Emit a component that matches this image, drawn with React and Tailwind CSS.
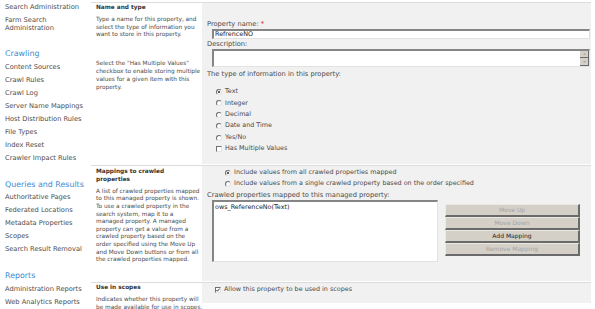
import React from "react";

const navGroups = [
  {
    heading: "Crawling",
    items: [
      "Content Sources",
      "Crawl Rules",
      "Crawl Log",
      "Server Name Mappings",
      "Host Distribution Rules",
      "File Types",
      "Index Reset",
      "Crawler Impact Rules",
    ],
  },
  {
    heading: "Queries and Results",
    items: [
      "Authoritative Pages",
      "Federated Locations",
      "Metadata Properties",
      "Scopes",
      "Search Result Removal",
    ],
  },
  {
    heading: "Reports",
    items: ["Administration Reports", "Web Analytics Reports"],
  },
];

const mappingText = [
  "A list of crawled properties mapped",
  "to this managed property is shown.",
  "To use a crawled property in the",
  "search system, map it to a",
  "managed property. A managed",
  "property can get a value from a",
  "crawled property based on the",
  "order specified using the Move Up",
  "and Move Down buttons or from all",
  "the crawled properties mapped.",
];

function Lines({ lines }) {
  return lines.map((l) => (
    <div key={l} className="whitespace-nowrap">
      {l}
    </div>
  ));
}

function Radio({ checked }) {
  return (
    <span className="relative inline-block shrink-0 w-[6px] h-[6px] rounded-full bg-white border border-t-[#6f6f6f] border-l-[#6f6f6f] border-r-[#e4e4e4] border-b-[#e4e4e4]">
      {checked && (
        <span className="absolute left-[1px] top-[1px] w-[2px] h-[2px] rounded-full bg-[#222]" />
      )}
    </span>
  );
}

function Check({ checked }) {
  return (
    <span className="relative inline-block shrink-0 w-[6px] h-[6px] bg-white border border-t-[#6f6f6f] border-l-[#6f6f6f] border-r-[#e4e4e4] border-b-[#e4e4e4]">
      {checked && (
        <svg viewBox="0 0 4 4" className="absolute inset-0 w-[4px] h-[4px]">
          <path d="M0.4 2 L1.5 3.2 L3.6 0.6" fill="none" stroke="#222" strokeWidth="0.9" />
        </svg>
      )}
    </span>
  );
}

function Option({ checked, box, children }) {
  return (
    <div className="h-[11.4px] flex items-center gap-[3px] whitespace-nowrap">
      {box ? <Check checked={checked} /> : <Radio checked={checked} />}
      <span>{children}</span>
    </div>
  );
}

function Button({ active, children }) {
  return (
    <div
      className={`h-[13px] bg-[#d4d0c8] border-t border-l border-t-[#ece9e3] border-l-[#ece9e3] border-r-2 border-b-2 border-r-[#6a6a6a] border-b-[#6a6a6a] flex items-center justify-center text-[6px] ${
        active ? "text-[#222]" : "text-[#a3a3a3]"
      }`}
    >
      {children}
    </div>
  );
}

const inset =
  "bg-white border-t-2 border-l-2 border-r border-b border-t-[#858585] border-l-[#858585] border-r-[#e2e2e2] border-b-[#e2e2e2]";

export default function App() {
  return (
    <div className="w-[595px] h-[309px] overflow-hidden bg-white flex font-['DejaVu_Sans',sans-serif]">
      {/* Left navigation */}
      <div className="w-[91px] shrink-0 pl-[5px] pt-[1px] text-[6.7px] text-[#4d4d4d]">
        <div className="h-[13px] flex items-center whitespace-nowrap">Search Administration</div>
        <div className="pt-[3px] leading-[7.5px]">
          Farm Search
          <br />
          Administration
        </div>
        {navGroups.map((g, i) => (
          <div key={g.heading} className={i === 0 ? "mt-[15.5px]" : "mt-[13.5px]"}>
            <div className="h-[13px] flex items-center text-[7.9px] text-[#3d8bd0] whitespace-nowrap">
              {g.heading}
            </div>
            {g.items.map((it) => (
              <div key={it} className="h-[13px] flex items-center whitespace-nowrap">
                {it}
              </div>
            ))}
          </div>
        ))}
      </div>

      {/* Content */}
      <div className="w-[500px] shrink-0 pt-[2px]">
        {/* Name and type */}
        <div className="h-[163px] border-t border-[#dcdcdc] flex">
          <div className="w-[111px] shrink-0 pl-[5px] text-[5.8px] leading-[7.7px] text-[#4a4a4a]">
            <div className="font-bold text-[5.8px] leading-[8px] text-[#333]">Name and type</div>
            <div className="mt-[5px]">
              <Lines
                lines={[
                  "Type a name for this property, and",
                  "select the type of information you",
                  "want to store in this property.",
                ]}
              />
            </div>
            <div className="mt-[20px] leading-[8px]">
              <Lines
                lines={[
                  'Select the "Has Multiple Values"',
                  "checkbox to enable storing multiple",
                  "values for a given item with this",
                  "property.",
                ]}
              />
            </div>
          </div>
          <div className="w-[389px] h-[161px] bg-[#f1f1f1] pl-[5px] pr-[1px] text-[6.7px] text-[#4a4a4a]">
            <div className="mt-[17px] leading-[8px]">
              Property name: <span className="text-[#e01010]">*</span>
            </div>
            <div className={`ml-[5px] mt-[1px] h-[10px] ${inset} flex items-center pl-[1px] text-[6.4px] text-[#222]`}>
              RefrenceNO
            </div>
            <div className="mt-[1.3px] leading-[8px]">Description:</div>
            <div className={`ml-[5px] mt-[0.7px] h-[18px] ${inset} flex justify-end`}>
              <div className="w-[9px] flex flex-col">
                <div className="h-[8px] bg-[#d4d0c8] border-r border-b border-[#6a6a6a] flex items-center justify-center">
                  <svg viewBox="0 0 4 2" className="w-[3px] h-[2px]">
                    <path d="M0 2 L2 0 L4 2 Z" fill="#9a9a9a" />
                  </svg>
                </div>
                <div className="h-[8px] bg-[#d4d0c8] border-r border-b border-[#6a6a6a] flex items-center justify-center">
                  <svg viewBox="0 0 4 2" className="w-[3px] h-[2px]">
                    <path d="M0 0 L2 2 L4 0 Z" fill="#9a9a9a" />
                  </svg>
                </div>
              </div>
            </div>
            <div className="mt-[3px] leading-[8px]">The type of information in this property:</div>
            <div className="mt-[8.3px] ml-[9px] text-[6.4px]">
              <Option checked>Text</Option>
              <Option>Integer</Option>
              <Option>Decimal</Option>
              <Option>Date and Time</Option>
              <Option>Yes/No</Option>
              <Option box>Has Multiple Values</Option>
            </div>
          </div>
        </div>

        {/* Mappings */}
        <div className="h-[117px] border-t border-[#dcdcdc] flex">
          <div className="w-[111px] shrink-0 pl-[5px] text-[5.8px] leading-[7.6px] text-[#4a4a4a]">
            <div className="mt-[1px] font-bold text-[5.8px] leading-[8px] text-[#333]">
              Mappings to crawled
              <br />
              properties
            </div>
            <div className="mt-[4.8px]">
              <Lines lines={mappingText} />
            </div>
          </div>
          <div className="w-[389px] h-[115px] bg-[#f1f1f1] pl-[5px] pr-[1px] text-[6.7px] text-[#4a4a4a]">
            <div className="mt-[1px] ml-[18px] text-[6.4px]">
              <Option checked>Include values from all crawled properties mapped</Option>
              <Option>Include values from a single crawled property based on the order specified</Option>
            </div>
            <div className="mt-[1.2px] leading-[8px]">Crawled properties mapped to this managed property:</div>
            <div className="mt-[1px] ml-[5px] flex items-start">
              <div className={`w-[226px] h-[62px] ${inset} pl-[1px] pt-[1px] text-[6.4px] text-[#222] leading-[8px]`}>
                ows_ReferenceNo(Text)
              </div>
              <div className="ml-[7px] mt-[4px] w-[135px] flex flex-col">
                <Button>Move Up</Button>
                <Button>Move Down</Button>
                <Button active>Add Mapping</Button>
                <Button>Remove Mapping</Button>
              </div>
            </div>
          </div>
        </div>

        {/* Use in scopes */}
        <div className="h-[40px] border-t border-[#dcdcdc] flex">
          <div className="w-[111px] shrink-0 pl-[5px] text-[5.8px] leading-[7.6px] text-[#4a4a4a]">
            <div className="font-bold text-[5.8px] leading-[8px] text-[#333]">Use in scopes</div>
            <div className="mt-[5px]">
              <Lines
                lines={["Indicates whether this property will", "be made available for use in scopes."]}
              />
            </div>
          </div>
          <div className="w-[389px] h-[20px] bg-[#f1f1f1] pl-[13px] text-[6.4px] text-[#4a4a4a]">
            <div className="mt-[1px]">
              <Option box checked>
                Allow this property to be used in scopes
              </Option>
            </div>
          </div>
        </div>
      </div>
    </div>
  );
}
